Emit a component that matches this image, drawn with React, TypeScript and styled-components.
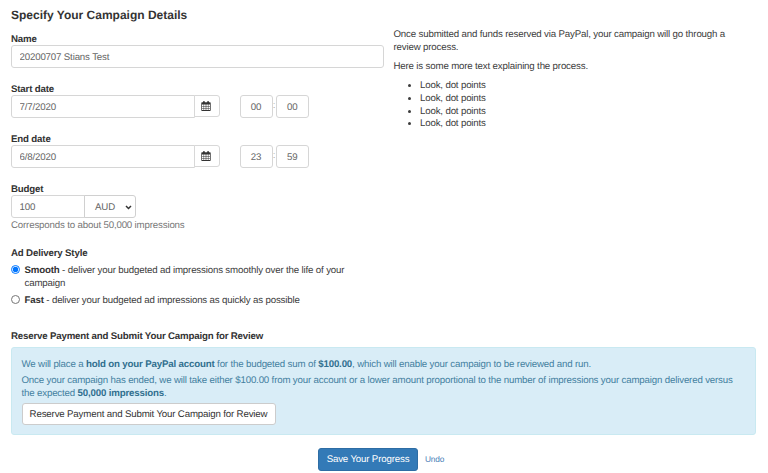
import React, { useState } from "react";
import styled, { createGlobalStyle } from "styled-components";

const GlobalStyle = createGlobalStyle`
  * { box-sizing: border-box; }
  body {
    margin: 0;
    background: #fff;
    color: #3c3c3c;
    font: 9.7px/12.7px "Liberation Sans", Arial, sans-serif;
    letter-spacing: -0.163px;
    text-rendering: geometricPrecision;
  }
  input, select, button {
    font: inherit;
    letter-spacing: inherit;
    text-rendering: inherit;
    margin: 0;
  }
  p, h1, h2, ul { margin: 0; }
`;

const Page = styled.main`
  width: 768px;
  height: 473px;
  padding: 7px 12px 0 11px;
  overflow: hidden;
`;

const Columns = styled.div`
  display: flex;
  height: 322px;
`;

const FormColumn = styled.section`
  width: 373px;
  margin-right: 9.5px;
`;

const Title = styled.h1`
  height: 26px;
  color: #333;
  font-size: 12px;
  line-height: 16px;
  font-weight: 700;
  letter-spacing: 0;
  white-space: nowrap;
`;

const Field = styled.div`
  height: 50px;
`;

const Label = styled.label`
  display: block;
  height: 12px;
  color: #333;
  line-height: 14px;
  font-weight: 700;
`;

const Row = styled.div`
  display: flex;
  align-items: center;
`;

const Input = styled.input<{ $width: number; $joined?: boolean; $center?: boolean }>`
  width: ${(p) => p.$width}px;
  height: 23px;
  padding: 1px ${(p) => (p.$center ? 0 : 7.5)}px 0;
  border: 1px solid #d6d6d6;
  border-radius: ${(p) => (p.$joined ? "3px 0 0 3px" : "3px")};
  background: #fff;
  color: #666;
  text-align: ${(p) => (p.$center ? "center" : "left")};
  outline: none;
`;

const CalendarButton = styled.button`
  display: flex;
  align-items: center;
  justify-content: center;
  width: 26px;
  height: 22px;
  margin: 0 20px 1px -1px;
  padding: 0 1px 0 0;
  border: 1px solid #d8d8d8;
  border-radius: 0 3px 3px 0;
  background: #fff;
`;

const Colon = styled.span`
  width: 3px;
  text-align: center;
  color: #aaa;
  overflow: hidden;
`;

const CurrencySelect = styled.div`
  display: flex;
  align-items: center;
  justify-content: space-between;
  width: 52px;
  height: 23px;
  margin-left: -1px;
  padding: 3px 3px 0 10px;
  border: 1px solid #d0d0d0;
  border-radius: 0 3px 3px 0;
  color: #666;

  svg { margin-bottom: 2px; }
`;

const Hint = styled.p`
  margin-top: 1.5px;
  color: #777;
`;

const Delivery = styled.div`
  margin-top: 13.5px;
`;

const Option = styled.label`
  display: flex;
  width: 350px;
  margin-top: 5px;
  line-height: 13px;

  b { color: #333; }

  & + & { margin-top: 4px; }
`;

const Radio = styled.input`
  flex: none;
  width: 9px;
  height: 9px;
  margin: 1px 4.5px 0 0;
`;

const Info = styled.aside`
  width: 350px;
  padding-top: 21.9px;

  p { margin-bottom: 6.5px; }
`;

const Points = styled.ul`
  padding-left: 26.5px;
  line-height: 12.8px;
`;

const SectionTitle = styled.h2`
  height: 18px;
  color: #333;
  font-size: 9.7px;
  line-height: 15px;
  font-weight: 700;
  letter-spacing: -0.18px;
`;

const Notice = styled.section`
  height: 88px;
  padding: 11px 9.5px 0;
  border: 1px solid #c9e9f1;
  border-radius: 3px;
  background: #d9edf7;
  color: #4380a0;

  p { margin-bottom: 3.2px; white-space: nowrap; }
  b { color: #31708f; }
`;

const Reserve = styled.button`
  display: block;
  height: 22px;
  width: 254px;
  margin-top: -0.5px;
  padding: 2px 0 0;
  border: 1px solid #ccc;
  border-radius: 3px;
  background: #fff;
  color: #333;
  white-space: nowrap;
`;

const Actions = styled.footer`
  display: flex;
  align-items: center;
  height: 23px;
  margin: 13px 0 0 307px;
`;

const Save = styled.button`
  width: 100px;
  height: 23px;
  padding: 1px 0 0;
  border: 1px solid #2e6da4;
  border-radius: 3px;
  background: #337ab7;
  color: #fff;
  white-space: nowrap;
`;

const Undo = styled.a`
  margin-left: 7px;
  color: #4a7fb8;
  font-size: 8.3px;
`;

const CalendarIcon = () => (
  <svg width="10" height="10" viewBox="0 0 10 10">
    <path fill="#333" d="M1 1.2h1V.2h1.8v1h2.4v-1H8v1h1q.7 0 .7.7v7.3q0 .7-.7.7H1q-.7 0-.7-.7V1.9q0-.7.7-.7z" />
    <path
      fill="#fff"
      d="M1 3.6h1.6v1.4H1zM3.1 3.6h1.6v1.4H3.1zM5.3 3.6h1.6v1.4H5.3zM7.4 3.6H9v1.4H7.4zM1 5.6h1.6v1.4H1zM3.1 5.6h1.6v1.4H3.1zM5.3 5.6h1.6v1.4H5.3zM7.4 5.6H9v1.4H7.4zM1 7.6h1.6v1.4H1zM3.1 7.6h1.6v1.4H3.1zM5.3 7.6h1.6v1.4H5.3zM7.4 7.6H9v1.4H7.4z"
    />
  </svg>
);

const Chevron = () => (
  <svg width="7" height="5" viewBox="0 0 7 5">
    <path d="M1 1l2.5 2.5L6 1" fill="none" stroke="#333" strokeWidth="1.5" />
  </svg>
);

type DateFieldProps = { label: string; date: string; hour: string; minute: string };

const DateField = ({ label, date, hour, minute }: DateFieldProps) => (
  <Field>
    <Label>{label}</Label>
    <Row>
      <Input $width={183.5} $joined defaultValue={date} />
      <CalendarButton aria-label={`Choose ${label}`}>
        <CalendarIcon />
      </CalendarButton>
      <Input $width={33} $center defaultValue={hour} />
      <Colon>:</Colon>
      <Input $width={33.5} $center defaultValue={minute} />
    </Row>
  </Field>
);

export default function App() {
  const [style, setStyle] = useState("smooth");
  return (
    <>
      <GlobalStyle />
      <Page>
        <Columns>
          <FormColumn>
            <Title>Specify Your Campaign Details</Title>
            <Field>
              <Label>Name</Label>
              <Input $width={373} defaultValue="20200707 Stians Test" />
            </Field>
            <DateField label="Start date" date="7/7/2020" hour="00" minute="00" />
            <DateField label="End date" date="6/8/2020" hour="23" minute="59" />
            <Field>
              <Label>Budget</Label>
              <Row>
                <Input $width={74} $joined defaultValue="100" />
                <CurrencySelect>
                  AUD
                  <Chevron />
                </CurrencySelect>
              </Row>
              <Hint>Corresponds to about 50,000 impressions</Hint>
            </Field>
            <Delivery>
              <Label>Ad Delivery Style</Label>
              <Option>
                <Radio type="radio" checked={style === "smooth"} onChange={() => setStyle("smooth")} />
                <span>
                  <b>Smooth</b> - deliver your budgeted ad impressions smoothly over the life of your
                  <br />
                  campaign
                </span>
              </Option>
              <Option>
                <Radio type="radio" checked={style === "fast"} onChange={() => setStyle("fast")} />
                <span>
                  <b>Fast</b> - deliver your budgeted ad impressions as quickly as possible
                </span>
              </Option>
            </Delivery>
          </FormColumn>
          <Info>
            <p>
              Once submitted and funds reserved via PayPal, your campaign will go through a
              <br />
              review process.
            </p>
            <p>Here is some more text explaining the process.</p>
            <Points>
              <li>Look, dot points</li>
              <li>Look, dot points</li>
              <li>Look, dot points</li>
              <li>Look, dot points</li>
            </Points>
          </Info>
        </Columns>
        <SectionTitle>Reserve Payment and Submit Your Campaign for Review</SectionTitle>
        <Notice>
          <p>
            We will place a <b>hold on your PayPal account</b> for the budgeted sum of <b>$100.00</b>, which will enable
            your campaign to be reviewed and run.
          </p>
          <p>
            Once your campaign has ended, we will take either $100.00 from your account or a lower amount proportional
            to the number of impressions your campaign delivered versus
            <br />
            the expected <b>50,000 impressions</b>.
          </p>
          <Reserve>Reserve Payment and Submit Your Campaign for Review</Reserve>
        </Notice>
        <Actions>
          <Save>Save Your Progress</Save>
          <Undo>Undo</Undo>
        </Actions>
      </Page>
    </>
  );
}
